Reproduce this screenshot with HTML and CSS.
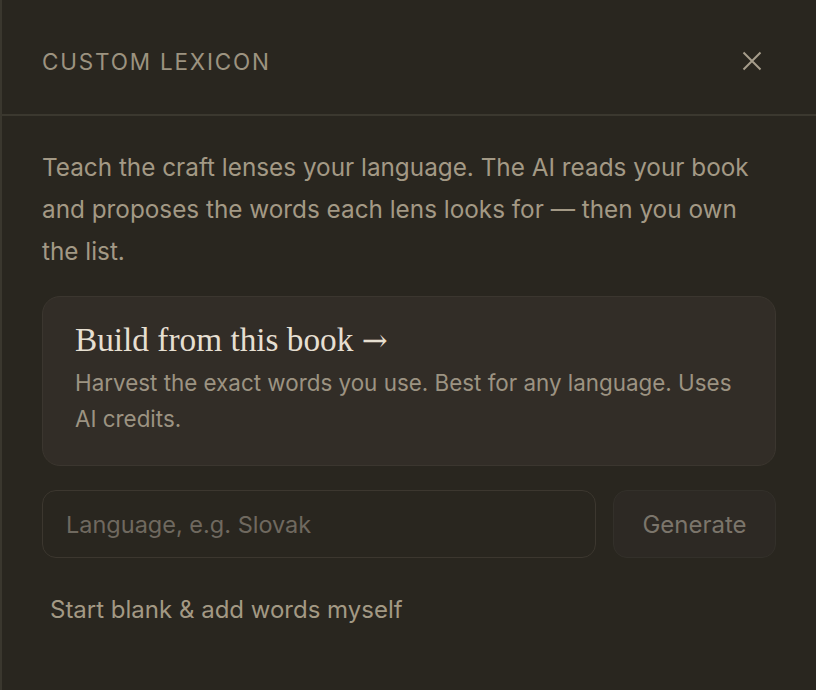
FILE: index.html
```html
<!DOCTYPE html>
<html lang="en">
<head>
  <meta charset="UTF-8" />
  <meta name="viewport" content="width=device-width, initial-scale=1.0"/>
  <title>Custom Lexicon</title>
  <link rel="stylesheet" href="styles.css">
</head>
<body>
  <aside class="panel">
    <header class="panel-head">
      <h2 class="panel-title">CUSTOM LEXICON</h2>
      <button class="close-btn" aria-label="Close">
        <svg width="20" height="20" viewBox="0 0 20 20">
          <path d="M1.5 1.5 L18.5 18.5 M18.5 1.5 L1.5 18.5" stroke="currentColor" stroke-width="2" fill="none"/>
        </svg>
      </button>
    </header>

    <div class="panel-body">
      <p class="intro">Teach the craft lenses your language. The AI reads your book and proposes the words each lens looks for — then you own the list.</p>

      <button class="build-card">
        <span class="build-title">Build from this book <span class="arrow">→</span></span>
        <span class="build-desc">Harvest the exact words you use. Best for any language. Uses AI credits.</span>
      </button>

      <div class="gen-row">
        <input type="text" class="lang-input" placeholder="Language, e.g. Slovak">
        <button class="gen-btn">Generate</button>
      </div>

      <button class="blank-btn">Start blank &amp; add words myself</button>
    </div>
  </aside>
</body>
</html>
```

FILE: styles.css
```css
body {
  margin: 0;
  background-color: #29261f;
  font-family: Inter, "Noto Sans", sans-serif;
  color: #a59c8a;
}

.panel {
  min-height: 690px;
  border-left: 2px solid #3a372e;
  background-color: #29261f;
  box-sizing: border-box;
}

.panel-head {
  height: 106px;
  display: flex;
  align-items: center;
  justify-content: space-between;
  padding: 8px 54px 0 40px;
  border-bottom: 2px solid #3b382f;
}

.panel-title {
  margin: 0;
  font-size: 22.5px;
  font-weight: 400;
  letter-spacing: 0.08em;
  color: #9c9380;
}

.close-btn {
  background: none;
  border: none;
  padding: 0;
  color: #a69d8b;
  cursor: pointer;
  display: flex;
}

.panel-body {
  padding: 30px 40px 0 40px;
}

.intro {
  margin: 0 0 24px 0;
  font-size: 24.3px;
  line-height: 42px;
  color: #a39985;
}

.build-card {
  display: flex;
  flex-direction: column;
  width: 100%;
  text-align: left;
  background-color: #322d27;
  border: 1px solid #3b362f;
  border-radius: 18px;
  padding: 22px 32px 28px 32px;
  font-family: inherit;
  cursor: pointer;
}

.build-title {
  font-family: "Liberation Serif", "DejaVu Serif", serif;
  font-size: 33.3px;
  line-height: 42px;
  color: #e6dfd1;
}

.arrow {
  font-family: "DejaVu Serif", serif;
  font-size: 31px;
}

.build-desc {
  margin-top: 4px;
  font-size: 22.4px;
  line-height: 36px;
  color: #9c9382;
}

.gen-row {
  display: flex;
  gap: 17px;
  margin-top: 24px;
}

.lang-input {
  flex: 1;
  height: 68px;
  box-sizing: border-box;
  background-color: #29261f;
  border: 1px solid #3c372f;
  border-radius: 14px;
  padding: 0 23px;
  font-family: inherit;
  font-size: 23.5px;
  color: #d8d0c0;
}

.lang-input::placeholder {
  color: #6f695f;
}

.gen-btn {
  width: 163px;
  height: 68px;
  background-color: #2d2924;
  border: 1px solid #33302a;
  border-radius: 14px;
  font-family: inherit;
  font-size: 24px;
  color: #7b756b;
  cursor: pointer;
}

.blank-btn {
  margin-top: 31px;
  background: none;
  border: none;
  padding: 6px 8px;
  font-family: inherit;
  font-size: 24px;
  color: #a39984;
  cursor: pointer;
}
```
